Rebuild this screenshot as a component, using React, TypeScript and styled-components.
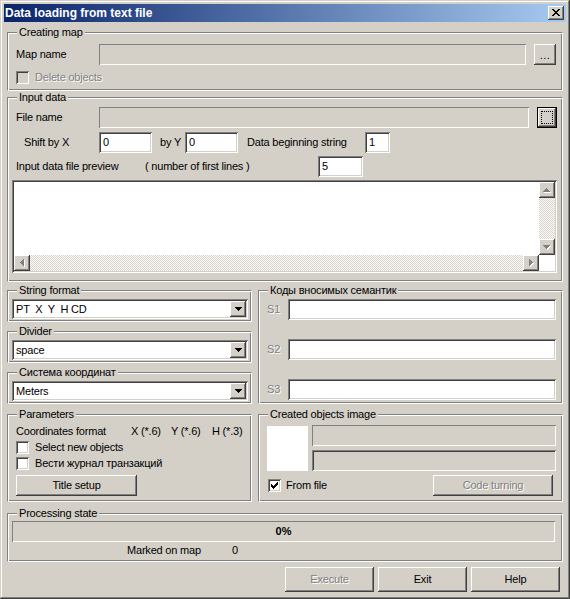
import React from 'react';
import styled, { createGlobalStyle, css } from 'styled-components';

const FACE = '#D4D0C8';
const SHADOW = '#808080';
const DARK = '#404040';
const LIGHT = '#FFFFFF';

const GlobalStyle = createGlobalStyle`
  html, body { margin: 0; padding: 0; background: ${FACE}; }
  *, *::before, *::after { box-sizing: border-box; }
`;

const raised = css`
  background: ${FACE};
  box-shadow: inset -1px -1px ${DARK}, inset 1px 1px ${LIGHT}, inset -2px -2px ${SHADOW}, inset 2px 2px ${FACE};
`;
const sunken = css`
  box-shadow: inset 1px 1px ${SHADOW}, inset -1px -1px ${LIGHT}, inset 2px 2px ${DARK}, inset -2px -2px ${FACE};
`;
const flatEdge = css`
  box-shadow: inset 1px 1px ${SHADOW}, inset -1px -1px ${LIGHT};
`;
const disabledText = css`
  color: ${SHADOW};
  text-shadow: 1px 1px 0 ${LIGHT};
`;
const dither = css`
  background-color: ${LIGHT};
  background-image: conic-gradient(${FACE} 25%, ${LIGHT} 0 50%, ${FACE} 0 75%, ${LIGHT} 0);
  background-size: 2px 2px;
`;

/* ---------- pixel glyphs (icons) ---------- */
const pixels = (rows: string[]) => {
  let d = '';
  rows.forEach((r, y) => {
    for (let x = 0; x < r.length; x++) if (r[x] === 'X') d += `M${x} ${y}h1v1h-1z`;
  });
  return d;
};
type GlyphProps = { rows: string[]; color?: string; shadow?: string };
const Glyph = ({ rows, color = '#000', shadow }: GlyphProps) => {
  const w = rows[0].length + (shadow ? 1 : 0);
  const h = rows.length + (shadow ? 1 : 0);
  const d = pixels(rows);
  return (
    <svg width={w} height={h} viewBox={`0 0 ${w} ${h}`} shapeRendering="crispEdges" style={{ display: 'block' }}>
      {shadow && <path d={d} fill={shadow} transform="translate(1 1)" />}
      <path d={d} fill={color} />
    </svg>
  );
};
const CLOSE_X = ['XX....XX', '.XX..XX.', '..XXXX..', '...XX...', '..XXXX..', '.XX..XX.', 'XX....XX'];
const CHECK = ['......X', '.....XX', 'X...XXX', 'XX.XXX.', 'XXXXX..', '.XXX...', '..X....'];
const DOWN = ['XXXXXXX', '.XXXXX.', '..XXX..', '...X...'];
const UP = ['...X...', '..XXX..', '.XXXXX.', 'XXXXXXX'];
const LEFT = ['...X', '..XX', '.XXX', 'XXXX', '.XXX', '..XX', '...X'];
const RIGHT = ['X...', 'XX..', 'XXX.', 'XXXX', 'XXX.', 'XX..', 'X...'];

/* ---------- window ---------- */
const Window = styled.div`
  width: 570px;
  height: 599px;
  padding: 4px;
  background: ${FACE};
  box-shadow: inset -1px -1px ${DARK}, inset 1px 1px ${FACE}, inset -2px -2px ${SHADOW}, inset 2px 2px ${LIGHT};
  display: flex;
  flex-direction: column;
  font-family: "Liberation Sans", Arial, sans-serif;
  font-size: 11px;
  letter-spacing: -0.2px;
  line-height: 13px;
  color: #000;
`;
const TitleBar = styled.div`
  height: 18px;
  flex: none;
  display: flex;
  align-items: center;
  justify-content: space-between;
  padding: 0 2px 0 1px;
  background: linear-gradient(to right, #0a246a, #a6caf0);
`;
const TitleText = styled.span`
  color: #fff;
  font-weight: bold;
  font-size: 12px;
  letter-spacing: 0;
  white-space: nowrap;
`;
const CloseButton = styled.div`
  width: 16px;
  height: 14px;
  ${raised};
  display: flex;
  align-items: center;
  justify-content: center;
  padding-bottom: 1px;
`;
const Body = styled.div`
  flex: 1;
  display: flex;
  flex-direction: column;
  padding: 0 3px;
`;

/* ---------- group box ---------- */
const Group = styled.div<{ $mt?: number; $pl?: number; $pr?: number; $pb?: number }>`
  margin-top: ${p => p.$mt ?? 0}px;
  padding: 0 ${p => p.$pr ?? 6}px ${p => p.$pb ?? 0}px ${p => p.$pl ?? 8}px;
  border: 1px solid ${SHADOW};
  border-right-color: ${LIGHT};
  border-bottom-color: ${LIGHT};
  box-shadow: inset 1px 1px ${LIGHT}, inset -1px -1px ${SHADOW};
  display: flex;
  flex-direction: column;
`;
const Caption = styled.div<{ $ml: number }>`
  align-self: flex-start;
  height: 13px;
  margin: -7px 0 0 ${p => p.$ml}px;
  padding: 0 2px;
  background: ${FACE};
  white-space: nowrap;
`;
const Columns = styled.div<{ $mt: number }>`
  margin-top: ${p => p.$mt}px;
  display: grid;
  grid-template-columns: 245px 305px;
  column-gap: 6px;
`;
const Stack = styled.div`
  display: flex;
  flex-direction: column;
`;

/* ---------- rows & controls ---------- */
const Row = styled.div<{ $mt?: number; $h?: number; $ml?: number; $between?: boolean }>`
  display: flex;
  align-items: center;
  flex: none;
  margin-top: ${p => p.$mt ?? 0}px;
  margin-left: ${p => p.$ml ?? 0}px;
  height: ${p => p.$h ?? 21}px;
  justify-content: ${p => (p.$between ? 'space-between' : 'flex-start')};
`;
const Label = styled.span<{ $w?: number; $pl?: number; $ml?: number; $disabled?: boolean }>`
  flex: none;
  white-space: pre;
  ${p => (p.$w ? `width: ${p.$w}px;` : '')}
  padding-left: ${p => p.$pl ?? 0}px;
  margin-left: ${p => p.$ml ?? 0}px;
  ${p => p.$disabled && disabledText};
`;
const Edit = styled.div<{ $w?: number; $flat?: boolean; $disabled?: boolean; $ml?: number }>`
  ${p => (p.$w ? `width: ${p.$w}px; flex: none;` : 'flex: 1; min-width: 0;')}
  height: 21px;
  margin-left: ${p => p.$ml ?? 0}px;
  background: ${p => (p.$disabled ? FACE : LIGHT)};
  ${p => (p.$flat ? flatEdge : sunken)};
  padding: 0 4px;
  display: flex;
  align-items: center;
`;
const Button = styled.div<{ $w: number; $h?: number; $ml?: number; $mr?: number; $disabled?: boolean }>`
  flex: none;
  width: ${p => p.$w}px;
  height: ${p => p.$h ?? 21}px;
  margin-left: ${p => p.$ml ?? 0}px;
  margin-right: ${p => p.$mr ?? 0}px;
  ${raised};
  display: flex;
  align-items: center;
  justify-content: center;
  white-space: nowrap;
  ${p => p.$disabled && disabledText};
`;
const DotsText = styled.span`
  margin-top: 2px;
  letter-spacing: 0.5px;
`;
const FocusButton = styled.div`
  flex: none;
  width: 20px;
  height: 21px;
  margin-left: 8px;
  background: ${FACE};
  box-shadow: inset 0 0 0 1px #000, inset -2px -2px ${DARK}, inset 2px 2px ${LIGHT}, inset -3px -3px ${SHADOW};
  display: flex;
  align-items: center;
  justify-content: center;
`;
const FocusRect = styled.span`
  width: 12px;
  height: 13px;
  border: 1px dotted #000;
`;
const CheckBox = styled.span<{ $disabled?: boolean; $ml?: number }>`
  flex: none;
  width: 13px;
  height: 13px;
  margin-left: ${p => p.$ml ?? 0}px;
  background: ${p => (p.$disabled ? FACE : LIGHT)};
  ${sunken};
  display: flex;
  align-items: center;
  justify-content: center;
`;
const Combo = styled.div<{ $mt: number }>`
  margin-top: ${p => p.$mt}px;
  height: 20px;
  flex: none;
  background: ${LIGHT};
  ${sunken};
  padding: 2px;
  display: flex;
  align-items: center;
`;
const ComboText = styled.span`
  flex: 1;
  padding-left: 2px;
  white-space: pre;
`;
const DropButton = styled.div`
  width: 16px;
  height: 16px;
  ${raised};
  display: flex;
  align-items: center;
  justify-content: center;
`;
const Memo = styled.div`
  margin: 3px 0 0 -4px;
  height: 93px;
  flex: none;
  background: ${LIGHT};
  ${sunken};
  padding: 2px;
  display: grid;
  grid-template-columns: 1fr 16px;
  grid-template-rows: 1fr 16px;
`;
const VScroll = styled.div`
  grid-column: 2;
  grid-row: 1;
  ${dither};
  display: flex;
  flex-direction: column;
  justify-content: space-between;
`;
const HScroll = styled.div`
  grid-column: 1;
  grid-row: 2;
  ${dither};
  display: flex;
  justify-content: space-between;
`;
const ArrowButton = styled.div`
  width: 16px;
  height: 16px;
  ${raised};
  display: flex;
  align-items: center;
  justify-content: center;
`;
const CoordGrid = styled.div`
  margin-top: 4px;
  height: 13px;
  display: grid;
  grid-template-columns: 115px 40px 41px auto;
  white-space: nowrap;
`;
const ImageRow = styled.div`
  margin-top: 4px;
  display: flex;
  gap: 4px;
`;
const Preview = styled.div`
  width: 41px;
  height: 45px;
  margin-top: 1px;
  background: ${LIGHT};
  flex: none;
`;
const EditStack = styled.div`
  flex: 1;
  display: flex;
  flex-direction: column;
  gap: 4px;
`;
const Progress = styled.div`
  margin-top: 1px;
  height: 21px;
  flex: none;
  ${flatEdge};
  display: flex;
  align-items: center;
  justify-content: center;
  font-weight: bold;
  letter-spacing: 0;
`;
const ButtonBar = styled.div`
  margin-top: 5px;
  padding-right: 3px;
  display: flex;
  justify-content: flex-end;
  gap: 4px;
`;

export default function App() {
  return (
    <>
      <GlobalStyle />
      <Window>
        <TitleBar>
          <TitleText>Data loading from text file</TitleText>
          <CloseButton>
            <Glyph rows={CLOSE_X} />
          </CloseButton>
        </TitleBar>
        <Body>
          <Group $mt={10} $pl={8} $pr={6} $pb={6}>
            <Caption $ml={1}>Creating map</Caption>
            <Row $mt={5}>
              <Label $w={83}>Map name</Label>
              <Edit $flat $disabled />
              <Button $w={22} $ml={8}>
                <DotsText>...</DotsText>
              </Button>
            </Row>
            <Row $mt={6} $h={13}>
              <CheckBox $disabled />
              <Label $ml={6} $disabled>Delete objects</Label>
            </Row>
          </Group>

          <Group $mt={6} $pl={8} $pr={5} $pb={8}>
            <Caption $ml={1}>Input data</Caption>
            <Row $mt={3}>
              <Label $w={83}>File name</Label>
              <Edit $flat $disabled />
              <FocusButton>
                <FocusRect />
              </FocusButton>
            </Row>
            <Row $mt={4}>
              <Label $w={83} $pl={8}>Shift by X</Label>
              <Edit $w={53}>0</Edit>
              <Label $w={25} $ml={8}>by Y</Label>
              <Edit $w={53}>0</Edit>
              <Label $w={118} $ml={9}>Data beginning string</Label>
              <Edit $w={25}>1</Edit>
            </Row>
            <Row $mt={3}>
              <Label $w={129}>Input data file preview</Label>
              <Label $w={173}>( number of first lines )</Label>
              <Edit $w={45}>5</Edit>
            </Row>
            <Memo>
              <VScroll>
                <ArrowButton>
                  <Glyph rows={UP} color={SHADOW} shadow={LIGHT} />
                </ArrowButton>
                <ArrowButton>
                  <Glyph rows={DOWN} color={SHADOW} shadow={LIGHT} />
                </ArrowButton>
              </VScroll>
              <HScroll>
                <ArrowButton>
                  <Glyph rows={LEFT} color={SHADOW} shadow={LIGHT} />
                </ArrowButton>
                <ArrowButton>
                  <Glyph rows={RIGHT} color={SHADOW} shadow={LIGHT} />
                </ArrowButton>
              </HScroll>
            </Memo>
          </Group>

          <Columns $mt={8}>
            <Stack>
              <Group $pl={4} $pr={3} $pb={2}>
                <Caption $ml={5}>String format</Caption>
                <Combo $mt={2}>
                  <ComboText>{'PT  X  Y  H CD'}</ComboText>
                  <DropButton>
                    <Glyph rows={DOWN} />
                  </DropButton>
                </Combo>
              </Group>
              <Group $mt={9} $pl={4} $pr={3} $pb={2}>
                <Caption $ml={5}>Divider</Caption>
                <Combo $mt={2}>
                  <ComboText>space</ComboText>
                  <DropButton>
                    <Glyph rows={DOWN} />
                  </DropButton>
                </Combo>
              </Group>
              <Group $mt={9} $pl={4} $pr={3} $pb={2}>
                <Caption $ml={5}>Система координат</Caption>
                <Combo $mt={2}>
                  <ComboText>Meters</ComboText>
                  <DropButton>
                    <Glyph rows={DOWN} />
                  </DropButton>
                </Combo>
              </Group>
            </Stack>
            <Group $pl={8} $pr={6}>
              <Caption $ml={1}>Коды вносимых семантик</Caption>
              <Row $mt={2}>
                <Label $w={21} $disabled>S1</Label>
                <Edit />
              </Row>
              <Row $mt={19}>
                <Label $w={21} $disabled>S2</Label>
                <Edit />
              </Row>
              <Row $mt={19}>
                <Label $w={21} $disabled>S3</Label>
                <Edit />
              </Row>
            </Group>
          </Columns>

          <Columns $mt={10}>
            <Group $pl={8} $pr={6} $pb={5}>
              <Caption $ml={1}>Parameters</Caption>
              <CoordGrid>
                <span>Coordinates format</span>
                <span>X (*.6)</span>
                <span>Y (*.6)</span>
                <span>H (*.3)</span>
              </CoordGrid>
              <Row $mt={3} $h={13}>
                <CheckBox />
                <Label $ml={6}>Select new objects</Label>
              </Row>
              <Row $mt={3} $h={13}>
                <CheckBox />
                <Label $ml={6}>Вести журнал транзакций</Label>
              </Row>
              <Row $mt={5}>
                <Button $w={121}>Title setup</Button>
              </Row>
            </Group>
            <Group $pl={8} $pr={6} $pb={5}>
              <Caption $ml={1}>Created objects image</Caption>
              <ImageRow>
                <Preview />
                <EditStack>
                  <Edit $flat $disabled />
                  <Edit $disabled />
                </EditStack>
              </ImageRow>
              <Row $mt={4} $between>
                <Row>
                  <CheckBox $ml={1}>
                    <Glyph rows={CHECK} />
                  </CheckBox>
                  <Label $ml={5}>From file</Label>
                </Row>
                <Button $w={120} $mr={3} $disabled>
                  Code turning
                </Button>
              </Row>
            </Group>
          </Columns>

          <Group $mt={11} $pl={4} $pr={7} $pb={4}>
            <Caption $ml={5}>Processing state</Caption>
            <Progress>0%</Progress>
            <Row $mt={2} $h={13}>
              <Label $w={105} $ml={115}>Marked on map</Label>
              <Label>0</Label>
            </Row>
          </Group>

          <ButtonBar>
            <Button $w={89} $h={25} $disabled>Execute</Button>
            <Button $w={89} $h={25}>Exit</Button>
            <Button $w={89} $h={25}>Help</Button>
          </ButtonBar>
        </Body>
      </Window>
    </>
  );
}
